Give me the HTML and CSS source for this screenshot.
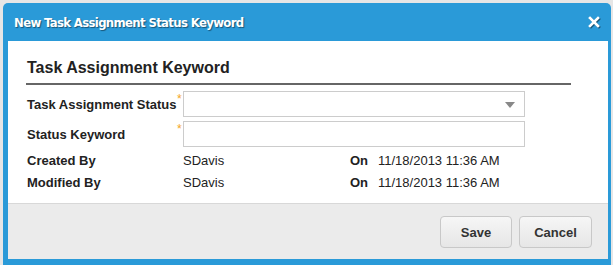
FILE: index.html
```html
<!DOCTYPE html>
<html>
<head>
<meta charset="utf-8">
<link rel="stylesheet" href="styles.css">
</head>
<body>
<div class="dialog">
  <div class="titlebar">
    <span class="title">New Task Assignment Status Keyword</span>
    <svg class="close" width="12" height="12" viewBox="0 0 12 12"><path d="M2 2 L10 10 M10 2 L2 10" stroke="#fff" stroke-width="2.6" stroke-linecap="square"/></svg>
  </div>
  <div class="content">
    <h2 class="section">Task Assignment Keyword</h2>
    <div class="form">
      <div class="row input-row">
        <label class="label">Task Assignment Status</label>
        <span class="req">*</span>
        <div class="select"><span class="caret"></span></div>
      </div>
      <div class="row input-row last">
        <label class="label">Status Keyword</label>
        <span class="req">*</span>
        <div class="input"></div>
      </div>
      <div class="row info-row">
        <span class="label">Created By</span>
        <span class="value">SDavis</span>
        <span class="on">On</span>
        <span class="date">11/18/2013 11:36 AM</span>
      </div>
      <div class="row info-row">
        <span class="label">Modified By</span>
        <span class="value">SDavis</span>
        <span class="on">On</span>
        <span class="date">11/18/2013 11:36 AM</span>
      </div>
    </div>
  </div>
  <div class="footer">
    <button class="btn">Save</button>
    <button class="btn">Cancel</button>
  </div>
</div>
</body>
</html>
```
FILE: styles.css
```css
html, body { margin: 0; padding: 0; }
body {
  background: #e6e6e6;
  width: 613px;
  height: 265px;
  overflow: hidden;
  font-family: "Liberation Sans", Arial, sans-serif;
  color: #222;
}
.dialog {
  margin: 3px 0 0 3px;
  width: 608px;
  height: 270px;
  background: #2a9ad8;
  border-radius: 5px;
  padding: 0 3px 0 5px;
  box-sizing: border-box;
}
.titlebar {
  height: 38px;
  display: flex;
  align-items: center;
  justify-content: space-between;
  padding: 0 8px 0 6px;
}
.title {
  color: #fff;
  font-family: "DejaVu Sans Condensed", "DejaVu Sans", sans-serif;
  font-weight: bold;
  font-size: 13px;
  letter-spacing: -0.65px;
  text-shadow: 1px 1px 1px rgba(0,0,0,0.45);
}
.close {
  filter: drop-shadow(1px 1px 0.5px rgba(0,0,0,0.45));
}
.content {
  background: #fff;
  height: 162px;
  padding: 17px 0 0 18px;
  box-sizing: border-box;
}
.section {
  margin: 0;
  font-size: 16px;
  font-weight: bold;
  color: #222;
  width: 544px;
  padding: 0 0 5px 1px;
  border-bottom: 2px solid #666;
  line-height: 20px;
}
.form {
  margin-top: 6px;
  padding-left: 1px;
}
.row {
  display: flex;
  align-items: center;
  font-size: 13px;
}
.input-row {
  height: 26px;
  margin-bottom: 4px;
}
.input-row.last { margin-bottom: 2px; }
.input-row .label {
  font-weight: bold;
  width: 150px;
}
.req {
  color: #f5a623;
  width: 6px;
  font-size: 12px;
  align-self: flex-start;
  margin-top: 1px;
}
.select, .input {
  width: 340px;
  height: 24px;
  border: 1px solid #ccc;
  position: relative;
}
.caret {
  position: absolute;
  right: 9px;
  top: 10px;
  width: 0;
  height: 0;
  border-left: 5px solid transparent;
  border-right: 5px solid transparent;
  border-top: 6px solid #888;
}
.info-row {
  height: 22px;
}
.info-row .label {
  font-weight: bold;
  width: 156px;
}
.value {
  width: 167px;
}
.on {
  font-weight: bold;
  width: 28px;
}
.footer {
  background: #ebebeb;
  border-top: 1px solid #d8d8d8;
  height: 56px;
  display: flex;
  justify-content: flex-end;
  align-items: flex-start;
  padding: 12px 16px 0 0;
  box-sizing: border-box;
  gap: 7px;
}
.btn {
  font-family: "Liberation Sans", Arial, sans-serif;
  font-weight: bold;
  font-size: 13px;
  color: #333;
  height: 32px;
  border: 1px solid #c8c8c8;
  border-radius: 4px;
  background: linear-gradient(#f6f6f6, #e6e6e6);
  padding: 0;
  width: 72px;
}
.btn + .btn { width: 73px; }
```
